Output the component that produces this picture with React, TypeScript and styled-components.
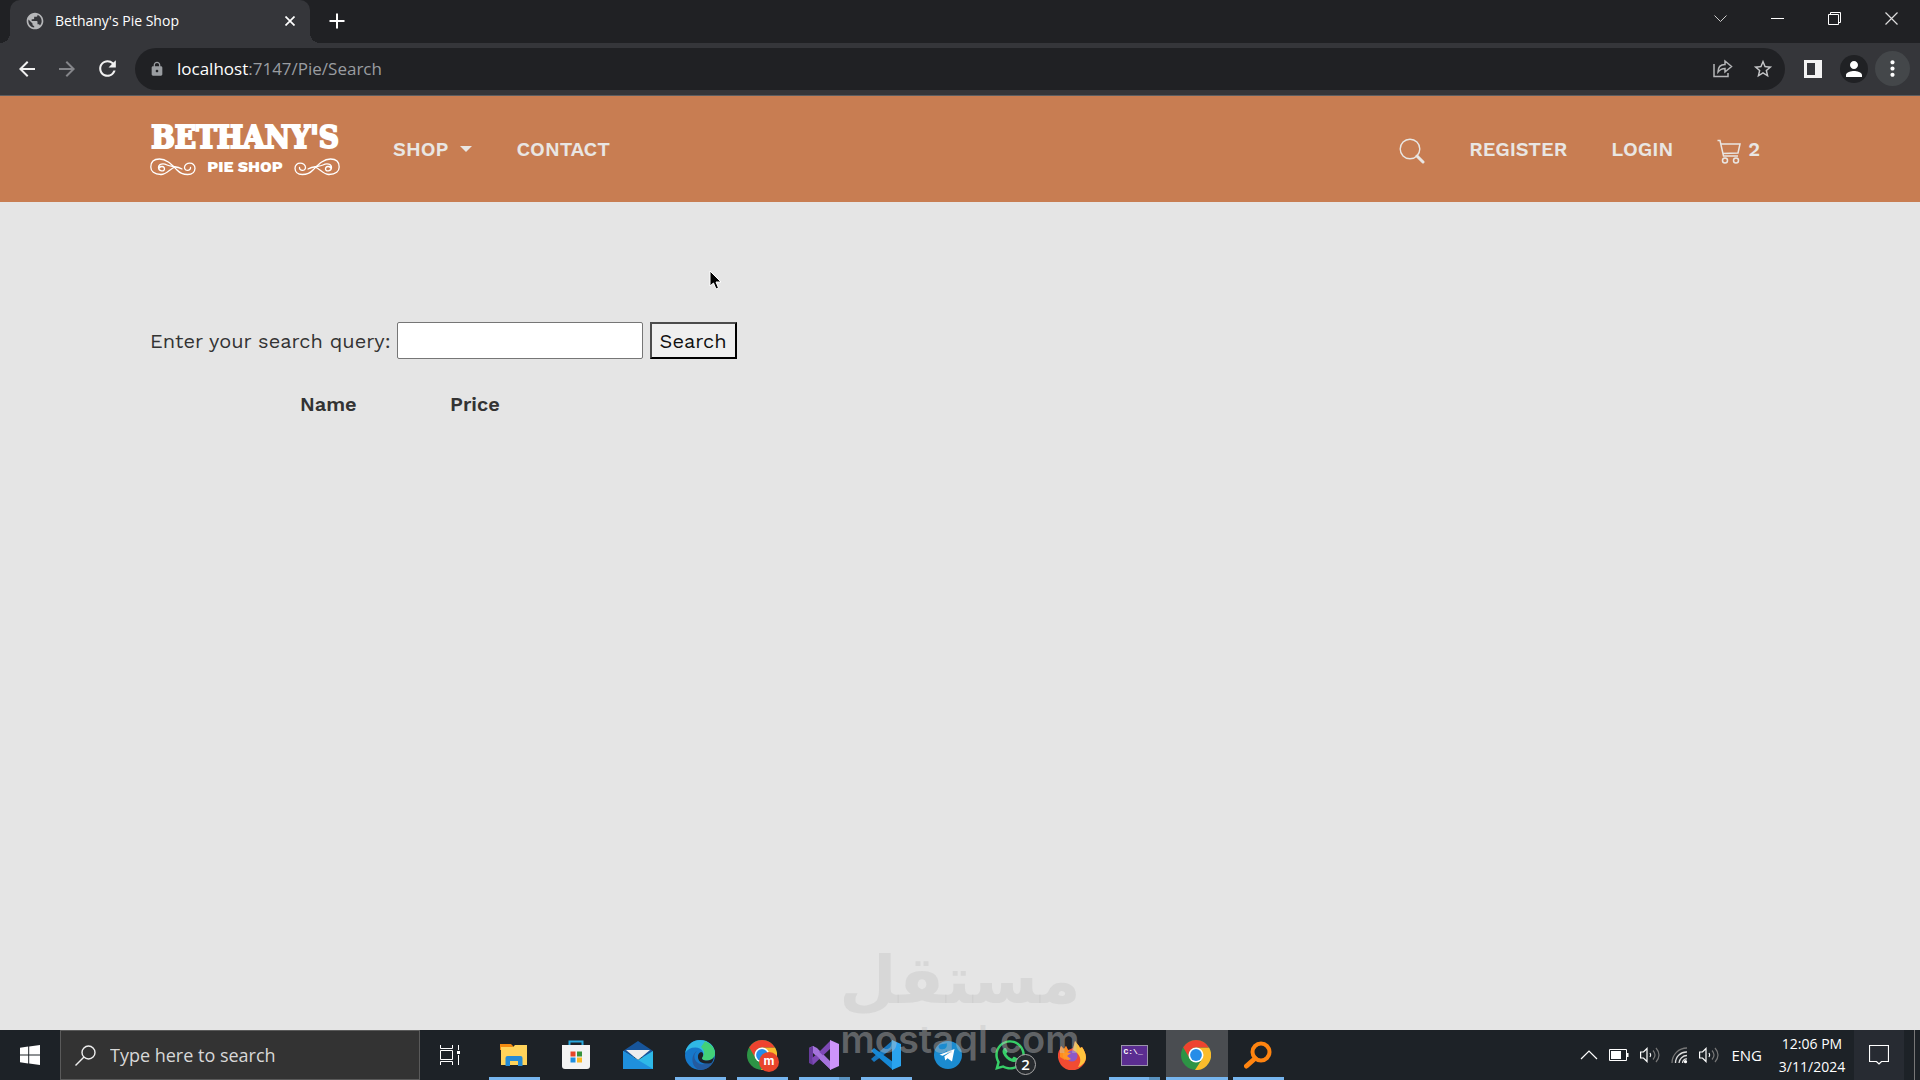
import React from "react";
import styled, { createGlobalStyle, css } from "styled-components";
import { MdArrowBack, MdArrowForward, MdLock, MdMoreVert, MdPerson, MdPublic, MdRefresh, MdStarOutline } from "react-icons/md";
import { FaWhatsapp } from "react-icons/fa";

const uiFont = `"Segoe UI", "Open Sans", "Noto Sans", sans-serif`;
const siteFont = `"Work Sans", Inter, "Liberation Sans", sans-serif`;

const GlobalStyle = createGlobalStyle`
  *, *::before, *::after { box-sizing: border-box; }
  body { margin: 0; background: #e5e5e5; }
  button, input { font: inherit; color: inherit; margin: 0; }
  button { cursor: pointer; }
  svg { display: block; flex: none; }
`;

const Screen = styled.div`
  position: relative;
  min-height: 100vh;
  display: flex;
  flex-direction: column;
  overflow: hidden;
`;

const PlainButton = styled.button`
  display: flex;
  align-items: center;
  justify-content: center;
  padding: 0;
  border: 0;
  background: none;
`;

/* Browser window */

const TabStrip = styled.header`
  display: flex;
  height: 43px;
  padding-left: 10px;
  background: #202124;
  color: #fff;
  font-family: ${uiFont};
`;

const Tab = styled.div`
  position: relative;
  display: flex;
  align-items: center;
  gap: 10px;
  width: 300px;
  padding: 0 14px 2px 15px;
  border-radius: 10px 10px 0 0;
  background: #35363a;
  font-size: 14px;
  &::before, &::after {
    content: "";
    position: absolute;
    bottom: 0;
    width: 10px;
    height: 10px;
  }
  &::before { left: -10px; background: radial-gradient(circle at 0 0, #202124 10px, #35363a 10px); }
  &::after { right: -10px; background: radial-gradient(circle at 100% 0, #202124 10px, #35363a 10px); }
`;

const TabTitle = styled.span`
  flex: 1;
  white-space: nowrap;
`;

const TabButton = styled(PlainButton)`
  width: 12px;
  height: 24px;
`;

const NewTab = styled(PlainButton)`
  width: 54px;
  height: 42px;
`;

const WindowControls = styled.div`
  display: flex;
  height: 37px;
  margin-left: auto;
`;

const WindowButton = styled(PlainButton)`
  width: 57px;
`;

const Toolbar = styled.div`
  display: flex;
  align-items: center;
  height: 53px;
  padding: 0 10px 1px 7px;
  border-bottom: 1px solid #5c5d60;
  background: #35363a;
  color: #fff;
`;

const NavButton = styled(PlainButton)<{ $dim?: boolean }>`
  width: 40px;
  height: 40px;
  color: ${(p) => (p.$dim ? "#85868a" : "#f1f1f1")};
`;

const AddressBar = styled.div`
  display: flex;
  align-items: center;
  flex: 1;
  height: 42px;
  margin: 0 8px;
  padding: 0 2px 0 14px;
  border-radius: 21px;
  background: #202124;
  color: #9a9da1;
  font: 17px ${uiFont};
`;

const Address = styled.div`
  flex: 1;
  padding-left: 12px;
  outline: 0;
  white-space: nowrap;
`;

const Host = styled.span`
  color: #fff;
`;

const Round = styled(PlainButton)<{ $size: number; $bg: string }>`
  width: ${(p) => p.$size}px;
  height: ${(p) => p.$size}px;
  margin-left: 7px;
  border-radius: 50%;
  background: ${(p) => p.$bg};
  color: #fff;
`;

/* Shop page */

const Container = styled.div`
  width: 100%;
  max-width: 1650px;
  margin: 0 auto;
  padding: 0 15px;
`;

const SiteNav = styled.nav`
  background: #c87d52;
  color: #e9e6e3;
  font: 600 20px ${siteFont};
`;

const NavRow = styled(Container)`
  display: flex;
  align-items: center;
  height: 106px;
`;

const Brand = styled.a`
  display: flex;
  flex-direction: column;
  align-items: center;
  width: 190px;
  color: #fff;
  text-decoration: none;
`;

const BrandName = styled.span`
  font: 700 31px/36px "DejaVu Serif Condensed", "DejaVu Serif", serif;
  font-stretch: condensed;
  -webkit-text-stroke: 2px #fff;
`;

const BrandSub = styled.span`
  display: flex;
  align-items: center;
  justify-content: space-between;
  width: 100%;
  font: 800 16px/24px ${siteFont};
`;

const NavLinks = styled.div<{ $end?: boolean }>`
  display: flex;
  align-items: center;
  gap: 44px;
  ${(p) => (p.$end ? css`margin-left: auto; padding-right: 10px;` : css`margin-left: 53px;`)}
`;

const NavLink = styled.a`
  display: flex;
  align-items: center;
  gap: 6px;
  color: inherit;
  line-height: 28px;
  text-decoration: none;
  svg { margin-top: 4px; }
`;

const Caret = styled.span`
  margin-left: 6px;
  border: 6px solid transparent;
  border-top-color: currentColor;
  border-bottom: 0;
`;

const Main = styled.main`
  flex: 1;
  background: #e5e5e5;
  color: #333;
  font: 20px/30px ${siteFont};
`;

const Content = styled(Container)`
  padding-top: 120px;
`;

const SearchForm = styled.form`
  display: flex;
  align-items: center;
`;

const QueryInput = styled.input`
  width: 246px;
  height: 37px;
  margin: 0 7px 0 6px;
  border: 1px solid #767676;
  border-radius: 2px;
  background: #fff;
`;

const SubmitButton = styled.button`
  height: 37px;
  padding: 0 8px;
  border: 2px outset #000;
  border-color: #4c4c4c #000 #000 #4c4c4c;
  background: #efefef;
  color: #111;
  line-height: 30px;
`;

const Results = styled.table`
  margin-top: 30px;
  border-collapse: collapse;
  th {
    width: 150px;
    padding: 0;
    font-weight: 600;
    text-align: left;
  }
`;

const Pointer = styled.svg`
  position: absolute;
  left: 709px;
  top: 270px;
`;

const Watermark = styled.div`
  position: absolute;
  right: 0;
  bottom: 18px;
  left: 0;
  z-index: 2;
  display: flex;
  flex-direction: column;
  align-items: center;
  color: rgba(195, 195, 195, 0.42);
  pointer-events: none;
`;

const WatermarkArabic = styled.span`
  font: 700 66px/70px "DejaVu Sans", sans-serif;
`;

const WatermarkDomain = styled.span`
  font: 600 38px/46px Inter, sans-serif;
`;

/* Desktop taskbar */

const Taskbar = styled.footer`
  display: flex;
  height: 50px;
  background: #1d2227;
  color: #fff;
  font: 15px ${uiFont};
`;

const StartButton = styled(PlainButton)`
  width: 60px;
`;

const TaskSearch = styled.label`
  display: flex;
  align-items: center;
  gap: 14px;
  width: 360px;
  padding-left: 14px;
  border: 1px solid #5a5a5a;
  background: #333;
  font-size: 18px;
`;

const TaskInput = styled.input`
  flex: 1;
  min-width: 0;
  padding: 0;
  border: 0;
  outline: 0;
  background: none;
  &::placeholder { color: #d8d8d8; opacity: 1; }
`;

const Apps = styled.div`
  display: flex;
  margin-left: 4px;
`;

const AppButton = styled(PlainButton)<{ $state?: string }>`
  position: relative;
  width: 62px;
  padding-right: 2px;
  background: ${(p) => (p.$state === "active" ? "#4a4d51" : "none")};
  ${(p) =>
    p.$state &&
    css`
      &::after {
        content: "";
        position: absolute;
        right: ${p.$state === "active" ? 0 : 6}px;
        bottom: 0;
        left: ${p.$state === "active" ? 0 : 5}px;
        height: 3px;
        background: ${p.$state === "many" ? "linear-gradient(90deg, #76b5ee 40px, #5a92bf 40px)" : "#76b5ee"};
      }
    `}
`;

const Badge = styled.span`
  position: absolute;
  right: 6px;
  bottom: 5px;
  width: 21px;
  height: 21px;
  border: 1px solid #aaa;
  border-radius: 50%;
  background: #272b2f;
  font: 600 15px/19px ${uiFont};
`;

const Tray = styled.div`
  display: flex;
  align-items: center;
  gap: 12px;
  margin-left: auto;
`;

const TrayIcons = styled.div`
  display: flex;
  align-items: center;
  gap: 11px;
`;

const Clock = styled.time`
  width: 76px;
  font-size: 14px;
  line-height: 23px;
  text-align: center;
  white-space: nowrap;
`;

const Notices = styled(PlainButton)`
  width: 50px;
  height: 50px;
  margin-left: -8px;
  background: #272b32;
`;

const ShowDesktop = styled(PlainButton)`
  width: 6px;
  height: 50px;
  margin-left: -2px;
  border-left: 1px solid #777;
`;

const Flourish = ({ flip }: { flip?: boolean }) => (
  <svg width="46" height="18" viewBox="0 0 46 18" fill="none" stroke="#fff" strokeWidth="1.3" strokeLinecap="round">
    <g transform={flip ? "translate(46 0) scale(-1 1)" : undefined}>
      <path d="M9 10.500C10 7.500 14.500 8 14.500 11C14.500 14 8.500 13.500 8.500 9.500C8.500 6 13 5 17 7C21 9 27 8 32 11" />
      <path d="M11 16.500C4 16.500 .8 13 .8 9C.8 4 4 1 9.500 1C17 1 22 7 27 12C32 17.500 44.500 19 45 10.500C45.200 3 34.500 4 34.500 9.500C34.500 13.500 41 13 40.500 9.500" />
      <path d="M11 16.500C17 16.500 20 10.500 25 9" />
    </g>
  </svg>
);

const Speaker = () => (
  <svg width="20" height="18" viewBox="0 0 20 18" fill="none" stroke="#fff" strokeWidth="1.200">
    <path d="M.6 6h2.900L7 2.500v13L3.500 12H.6z" />
    <path d="M10 7q1.500 2 0 4" />
    <path d="M13 4.500q4 4.500 0 9M16 2q6 7 0 14" stroke="#777" />
  </svg>
);

const Wifi = () => (
  <svg width="17" height="17" viewBox="0 0 17 17" fill="none" stroke="#ddd" strokeWidth="1.300">
    <path d="M1 16A15 15 0 0 1 16 1" stroke="#777" />
    <path d="M4.500 16A11 11 0 0 1 16 5" />
    <path d="M8 16A8 8 0 0 1 16 8.500" />
    <path d="M11.500 16A4 4 0 0 1 16 12" />
    <circle cx="14.500" cy="14.700" r="1.600" fill="#fff" stroke="none" />
  </svg>
);

const ChromeLogo = () => (
  <svg width="30" height="30" viewBox="0 0 30 30">
    <circle cx="15" cy="15" r="15" fill="#2d9445" />
    <path d="M15 7.500H28A15 15 0 0 1 14 30l7.500-11.500z" fill="#fbbc2c" />
    <path d="M2.200 7.200A15 15 0 0 1 28 7.500H15A7.500 7.500 0 0 0 8.300 18z" fill="#ee432f" />
    <circle cx="15" cy="15" r="7.500" fill="#fff" />
    <circle cx="15" cy="15" r="5.900" fill="#258de8" />
  </svg>
);

const ExplorerLogo = () => (
  <svg width="28" height="24" viewBox="0 0 28 24">
    <path d="M0 1h11l2 2v4H0z" fill="#f28a10" />
    <path d="M1 4h12l2-2h12v20H1z" fill="#ffd35a" />
    <path d="M5.500 23V15a2 2 0 0 1 2-2h13a2 2 0 0 1 2 2v8H18v-5h-8v5z" fill="#258bd5" />
  </svg>
);

const StoreLogo = () => (
  <svg width="30" height="30" viewBox="0 0 30 30">
    <path d="M8.500 7V1.500h13V7" fill="none" stroke="#29a8dd" strokeWidth="2" />
    <path d="M1 5h28v21a3 3 0 0 1-3 3H4a3 3 0 0 1-3-3z" fill="#f3f3f3" />
    <path d="M9.500 11.500h5v5h-5z" fill="#e64528" />
    <path d="M16 11.500h5v5h-5z" fill="#36923c" />
    <path d="M9.500 17.500h5v5h-5z" fill="#1d8fe1" />
    <path d="M16 17.500h5v5h-5z" fill="#fbb924" />
  </svg>
);

const MailLogo = () => (
  <svg width="30" height="28" viewBox="0 0 30 28">
    <path d="M0 10L15 0l15 10v6H0z" fill="#17559b" />
    <path d="M3 9h24L15 19z" fill="#eee" />
    <path d="M0 10l15 9L30 10v18H0z" fill="#2eb9e8" />
    <path d="M0 10l30 18H0z" fill="#1f90dd" />
  </svg>
);

const EdgeLogo = () => (
  <svg width="30" height="30" viewBox="0 0 30 30">
    <circle cx="15" cy="15" r="15" fill="#1678ca" />
    <path d="M.2 13A15 15 0 0 1 15 0C24 0 30 6.500 30 13c0 5-4 7.500-8 7.500-4 0-6-1.500-4.500-3.500C20 13 17 7.500 10.500 7.500 5.500 7.500 2 9.500.2 13z" fill="#30b9e5" />
    <path d="M20 1.200C27 4 30 9 30 13c0 5-4 7.500-8 7.500-4 0-6-1.500-4.500-3.500C20 14 19 9 16 7z" fill="#42d178" />
    <path d="M12 11c-6 5-1 15 8 13 4-.5 7-2 8-2A15 15 0 0 1 15 30C6 28 5 15 12 11z" fill="#245b9f" />
    <path d="M17.500 17c-1.500 2 .5 3.500 4.500 3.500 3 0 5.500-1.200 7-3.500-.5 3-2 6-3 6-6 1.500-12 0-13-5-.5-3 1-5.500 3-6 2 0 3 3 1.500 5z" fill="#1d2227" />
  </svg>
);

const VisualStudioLogo = () => (
  <svg width="30" height="30" viewBox="0 0 30 30">
    <path d="M0 8l4-2 4 2 14 14v8L4 13v5l-4 3z" fill="#a574dc" />
    <path d="M0 8l4-2v19l-4-2z" fill="#673b9c" />
    <path d="M4 25l18-17V0L8 14l-5 4z" fill="#7d49b5" />
    <path d="M4 6l18 17v7L4 12z" fill="#a574dc" />
    <path d="M21 0l9 4v22l-9 4z" fill="#cd94fa" />
  </svg>
);

const CodeLogo = () => (
  <svg width="30" height="30" viewBox="0 0 30 30">
    <path d="M0 19L22 0v8L3 22z" fill="#1776bd" />
    <path d="M0 11l3-3 19 14v8z" fill="#1688d5" />
    <path d="M21 0l9 4v22l-9 4z" fill="#2aa3ee" />
  </svg>
);

const TelegramLogo = () => (
  <svg width="28" height="28" viewBox="0 0 28 28">
    <circle cx="14" cy="14" r="14" fill="#1b8bd0" />
    <path d="M5.500 13.800L20.500 8l-2.500 12.500-4.500-3.300-2.300 2.200-.8-4.200 7.600-5.200-9.300 4.800z" fill="#fff" />
  </svg>
);

const FirefoxLogo = () => (
  <svg width="28" height="29" viewBox="0 0 28 29">
    <path d="M2 8l1-3 3 3 2-3 2 4 5-2 2-7 4 5 1 2 2-1c4 6 6 12 1 18a14 14 0 0 1-22 0C-1 18-1 12 2 8z" fill="#f24b32" />
    <path d="M17 0l4 5 1 2 2-1c4 6 6 12 1 17-2 2-4 3-5 3 4-7 3-12-5-17z" fill="#ffc33d" />
    <path d="M2 8l1-3 3 3 2-3 2 4 4 1-4 4-3 5-5-3z" fill="#ff8d1d" />
    <circle cx="14" cy="15" r="5.500" fill="#8c59c8" />
    <path d="M5 11l8 1-4 3 4 3c-3 2-6 1-8-2z" fill="#ff9628" />
  </svg>
);

const ConsoleIcon = styled.span`
  width: 27px;
  height: 21px;
  padding-left: 2px;
  border: 1px solid #9a94aa;
  background: #5b2d91;
  color: #fff;
  font: 700 8px/12px "Liberation Mono", monospace;
  text-align: left;
`;

const ChromeProfile = styled.span`
  position: relative;
  display: block;
`;

const ProfileBadge = styled.span`
  position: absolute;
  left: 12px;
  top: 12px;
  width: 20px;
  height: 20px;
  border-radius: 50%;
  background: #e8452c;
  font: 700 12px/18px Inter, sans-serif;
  text-align: center;
`;

const apps: { name: string; icon: React.ReactNode; state?: string; badge?: string }[] = [
  { name: "File Explorer", icon: <ExplorerLogo />, state: "open" },
  { name: "Microsoft Store", icon: <StoreLogo /> },
  { name: "Mail", icon: <MailLogo /> },
  { name: "Edge", icon: <EdgeLogo />, state: "open" },
  { name: "Chrome profile", icon: <ChromeProfile><ChromeLogo /><ProfileBadge>m</ProfileBadge></ChromeProfile>, state: "open" },
  { name: "Visual Studio", icon: <VisualStudioLogo />, state: "many" },
  { name: "Visual Studio Code", icon: <CodeLogo />, state: "open" },
  { name: "Telegram", icon: <TelegramLogo /> },
  { name: "WhatsApp", icon: <FaWhatsapp size={34} color="#37cf68" />, badge: "2" },
  { name: "Firefox", icon: <FirefoxLogo /> },
  { name: "Command Prompt", icon: <ConsoleIcon>C:\_</ConsoleIcon>, state: "many" },
  { name: "Chrome", icon: <ChromeLogo />, state: "active" },
  {
    name: "Everything",
    icon: (
      <svg width="28" height="28" viewBox="0 0 28 28" fill="none" stroke="#ff8410">
        <circle cx="17" cy="11" r="8.500" strokeWidth="4" />
        <path d="M11 17.500L2.500 25" strokeWidth="5" strokeLinecap="round" />
      </svg>
    ),
    state: "open",
  },
];

export default function App() {
  return (
    <Screen>
      <GlobalStyle />
      <TabStrip>
        <Tab>
          <MdPublic size={20} color="#b6b7b9" />
          <TabTitle>Bethany's Pie Shop</TabTitle>
          <TabButton aria-label="Close tab">
            <svg width="10" height="10" viewBox="0 0 10 10" stroke="#fff" strokeWidth="1.700"><path d="M.5.5l9 9M9.500.5l-9 9" /></svg>
          </TabButton>
        </Tab>
        <NewTab aria-label="New tab">
          <svg width="16" height="16" viewBox="0 0 16 16" stroke="#fff" strokeWidth="2"><path d="M8 .5v15M.5 8h15" /></svg>
        </NewTab>
        <WindowControls>
          <WindowButton aria-label="Search tabs">
            <svg width="13" height="8" viewBox="0 0 13 8" fill="none" stroke="#ccc"><path d="M.5.5l6 6 6-6" /></svg>
          </WindowButton>
          <WindowButton aria-label="Minimize">
            <svg width="13" height="1" viewBox="0 0 13 1"><path d="M0 0h13v1H0z" fill="#fff" /></svg>
          </WindowButton>
          <WindowButton aria-label="Restore">
            <svg width="13" height="13" viewBox="0 0 13 13" fill="none" stroke="#fff"><path d="M.5 2.500h10v10H.5zM2.500 2.500v-2h10v10h-2" /></svg>
          </WindowButton>
          <WindowButton aria-label="Close">
            <svg width="13" height="13" viewBox="0 0 13 13" stroke="#ddd" strokeWidth="1.200"><path d="M.5.5l12 12M12.500.5l-12 12" /></svg>
          </WindowButton>
        </WindowControls>
      </TabStrip>
      <Toolbar>
        <NavButton aria-label="Back"><MdArrowBack size={24} /></NavButton>
        <NavButton aria-label="Forward" $dim><MdArrowForward size={24} /></NavButton>
        <NavButton aria-label="Reload"><MdRefresh size={25} /></NavButton>
        <AddressBar>
          <MdLock size={16} />
          <Address role="textbox" aria-label="Address" contentEditable suppressContentEditableWarning spellCheck={false}>
            <Host>localhost</Host>:7147/Pie/Search
          </Address>
          <NavButton aria-label="Share">
            <svg width="20" height="19" viewBox="0 0 20 19" fill="none" stroke="#b4b5b7" strokeWidth="1.500">
              <path d="M1 5v12.500h14V14" />
              <path d="M5 13c0-5 3-7.500 7-7.500V2l6.500 5.500L12 13V9.500c-3 0-5 1-7 3.500z" />
            </svg>
          </NavButton>
          <NavButton aria-label="Bookmark"><MdStarOutline size={22} color="#c5c6c8" /></NavButton>
        </AddressBar>
        <NavButton aria-label="Side panel">
          <svg width="18" height="18" viewBox="0 0 18 18"><path d="M0 0h18v18H0zM3 3v12h8V3z" fill="#f3f3f3" fillRule="evenodd" /></svg>
        </NavButton>
        <Round $size={28} $bg="#202124" aria-label="Profile"><MdPerson size={24} /></Round>
        <Round $size={35} $bg="#44474a" aria-label="Menu"><MdMoreVert size={25} /></Round>
      </Toolbar>

      <SiteNav>
        <NavRow>
          <Brand href="#">
            <BrandName>BETHANY'S</BrandName>
            <BrandSub><Flourish />PIE SHOP<Flourish flip /></BrandSub>
          </Brand>
          <NavLinks>
            <NavLink href="#">SHOP<Caret /></NavLink>
            <NavLink href="#">CONTACT</NavLink>
          </NavLinks>
          <NavLinks $end>
            <NavLink href="#" aria-label="Search pies">
              <svg width="26" height="26" viewBox="0 0 26 26" fill="none" stroke="currentColor" strokeLinecap="round">
                <circle cx="11" cy="11" r="9.800" strokeWidth="1.400" />
                <path d="M18 18l6 6" strokeWidth="3" />
              </svg>
            </NavLink>
            <NavLink href="#">REGISTER</NavLink>
            <NavLink href="#">LOGIN</NavLink>
            <NavLink href="#">
              <svg width="25" height="25" viewBox="0 0 25 25" fill="none" stroke="currentColor" strokeWidth="1.500">
                <path d="M.5 1.500H3L6.500 17H21M4 5h19l-2 9-15.500.5" />
                <circle cx="8" cy="21.500" r="2.500" />
                <circle cx="19" cy="21.500" r="2.500" />
              </svg>
              2
            </NavLink>
          </NavLinks>
        </NavRow>
      </SiteNav>

      <Main>
        <Content>
          <SearchForm onSubmit={(e) => e.preventDefault()}>
            <label htmlFor="query">Enter your search query:</label>
            <QueryInput id="query" type="text" />
            <SubmitButton type="submit">Search</SubmitButton>
          </SearchForm>
          <Results>
            <thead>
              <tr><th /><th scope="col">Name</th><th scope="col">Price</th></tr>
            </thead>
          </Results>
        </Content>
      </Main>

      <Taskbar>
        <StartButton aria-label="Start">
          <svg width="20" height="20" viewBox="0 0 20 20" fill="#fff"><path d="M0 2.800L8.200 1.600v7.900H0zM9.200 1.500L20 0v9.500H9.200zM0 10.500h8.200v7.900L0 17.200zM9.200 10.500H20V20L9.200 18.500z" /></svg>
        </StartButton>
        <TaskSearch>
          <svg width="21" height="21" viewBox="0 0 21 21" fill="none" stroke="#eee" strokeWidth="1.400"><circle cx="13.500" cy="7.500" r="6.500" /><path d="M9 12L.5 20.500" /></svg>
          <TaskInput placeholder="Type here to search" aria-label="Type here to search" />
        </TaskSearch>
        <StartButton aria-label="Task view">
          <svg width="20" height="20" viewBox="0 0 20 20" fill="none" stroke="#fff"><path d="M.5 0v3.500h12V0M.5 5.500h12v9H.5zM.5 20v-3.500h12V20M18.500 0v5M18.500 10v10" /><path d="M17 6h3v3h-3z" fill="#fff" stroke="none" /></svg>
        </StartButton>
        <Apps>
          {apps.map((a) => (
            <AppButton key={a.name} aria-label={a.name} $state={a.state}>
              {a.icon}
              {a.badge && <Badge>{a.badge}</Badge>}
            </AppButton>
          ))}
        </Apps>
        <Tray>
          <TrayIcons>
            <svg width="18" height="10" viewBox="0 0 18 10" fill="none" stroke="#fff" strokeWidth="1.200"><path d="M1 9l8-8 8 8" /></svg>
            <svg width="20" height="12" viewBox="0 0 20 12"><path d="M.5.5h17v11H.5z" fill="none" stroke="#fff" /><path d="M2 2h10v8H2zM18 4h1.500v4H18z" fill="#fff" /></svg>
            <Speaker />
            <Wifi />
            <Speaker />
          </TrayIcons>
          <span>ENG</span>
          <Clock>12:06 PM<br />3/11/2024</Clock>
          <Notices aria-label="Notifications">
            <svg width="20" height="20" viewBox="0 0 20 20" fill="none" stroke="#fff" strokeWidth="1.200"><path d="M.5.5h19v16h-7L10 19l-2.500-2.500h-7z" /></svg>
          </Notices>
          <ShowDesktop aria-label="Show desktop" />
        </Tray>
      </Taskbar>

      <Pointer width="14" height="22" viewBox="0 0 14 22">
        <path d="M1 1v15l3.500-3 2.500 6 2.500-1-2.500-6h5z" fill="#000" stroke="#fff" />
      </Pointer>
      <Watermark>
        <WatermarkArabic lang="ar">مستقل</WatermarkArabic>
        <WatermarkDomain>mostaql.com</WatermarkDomain>
      </Watermark>
    </Screen>
  );
}
